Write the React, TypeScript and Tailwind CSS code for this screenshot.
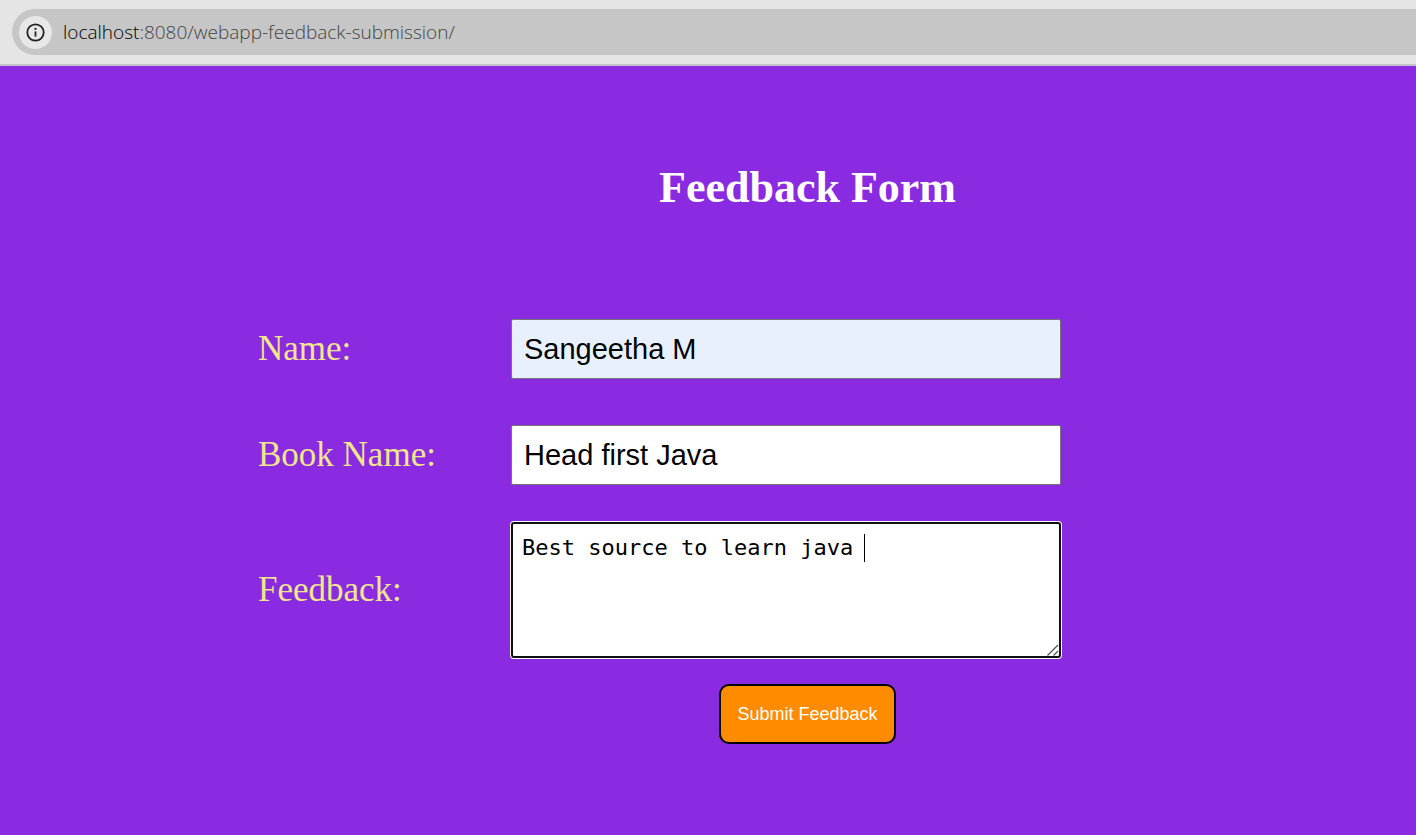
import { useState } from "react";

const labelClass =
  "font-['Liberation_Serif',serif] text-[35px] leading-[40px] text-[#f0e68c]";
const inputClass =
  "h-[60px] w-full max-w-[550px] rounded-[2px] border border-[#767676] px-3 font-['Liberation_Sans',sans-serif] text-[29px] text-black outline-none";

function AddressBar() {
  return (
    <header className="border-b-2 border-[#c3c4c8] bg-[#e5e5e5] pt-[9px] pb-[9px] pl-3">
      <div className="flex h-[46px] items-center gap-[11px] rounded-l-full bg-[#c6c6c6] pl-[7px]">
        <button
          type="button"
          aria-label="View site information"
          className="flex size-[33px] shrink-0 items-center justify-center rounded-full bg-[#e7e7e7]"
        >
          <svg viewBox="0 0 19 19" className="size-[19px]" fill="none" aria-hidden="true">
            <circle cx="9.5" cy="9.5" r="8.2" stroke="#222" strokeWidth="1.8" />
            <path d="M9.5 8.4v5.2" stroke="#222" strokeWidth="1.8" />
            <circle cx="9.5" cy="5.9" r="1.1" fill="#222" />
          </svg>
        </button>
        <p className="pb-px font-['Open_Sans','Noto_Sans',sans-serif] text-[19px] leading-[26px] font-light whitespace-nowrap text-[#444]">
          <span className="text-black">localhost</span>:8080/webapp-feedback-submission/
        </p>
      </div>
    </header>
  );
}

export default function App() {
  const [name, setName] = useState("Sangeetha M");
  const [book, setBook] = useState("Head first Java");
  const [feedback, setFeedback] = useState("Best source to learn java ");

  return (
    <div className="flex min-h-screen flex-col bg-[#8a2be2]">
      <AddressBar />
      <main className="flex-1 pt-[97px] pr-[59px] pb-16 pl-[258px]">
        <form onSubmit={(e) => e.preventDefault()}>
          <h1 className="text-center font-['Liberation_Serif',serif] text-[44px] leading-[50px] font-bold text-white">
            Feedback Form
          </h1>
          <div className="mt-[106px] grid grid-cols-[253px_1fr] items-center">
            <label htmlFor="name" className={labelClass}>
              Name:
            </label>
            <input
              id="name"
              value={name}
              onChange={(e) => setName(e.target.value)}
              className={`${inputClass} bg-[#e8f0fe]`}
            />
            <label htmlFor="book" className={`mt-[46px] ${labelClass}`}>
              Book Name:
            </label>
            <input
              id="book"
              value={book}
              onChange={(e) => setBook(e.target.value)}
              className={`mt-[46px] ${inputClass} bg-white`}
            />
            <label htmlFor="feedback" className={`mt-[37px] ${labelClass}`}>
              Feedback:
            </label>
            <div className="relative mt-[37px] max-w-[550px] font-['DejaVu_Sans_Mono',monospace] text-[22px] leading-[28px]">
              <textarea
                id="feedback"
                value={feedback}
                onChange={(e) => setFeedback(e.target.value)}
                className="block h-[136px] w-full resize-none rounded-[3px] border-2 border-[#101010] bg-white px-[9px] py-[10px] text-black caret-transparent shadow-[0_0_0_1px_#fff] outline-none"
              />
              <span
                aria-hidden="true"
                className="pointer-events-none absolute top-3 left-[calc(9px+26ch)] h-7 w-px bg-black"
              />
              <svg
                viewBox="0 0 12 12"
                className="pointer-events-none absolute right-[2px] bottom-[2px] size-3"
                stroke="#555"
                strokeWidth="1.3"
                aria-hidden="true"
              >
                <path d="M0.5 11.5 11 1M6.5 11.5 11 7" />
              </svg>
            </div>
          </div>
          <div className="mt-[26px] flex justify-center">
            <button
              type="submit"
              className="h-[60px] rounded-[10px] border-2 border-black bg-[#ff8c00] px-4 font-['Liberation_Sans',sans-serif] text-[18px] text-white"
            >
              Submit Feedback
            </button>
          </div>
        </form>
      </main>
    </div>
  );
}
